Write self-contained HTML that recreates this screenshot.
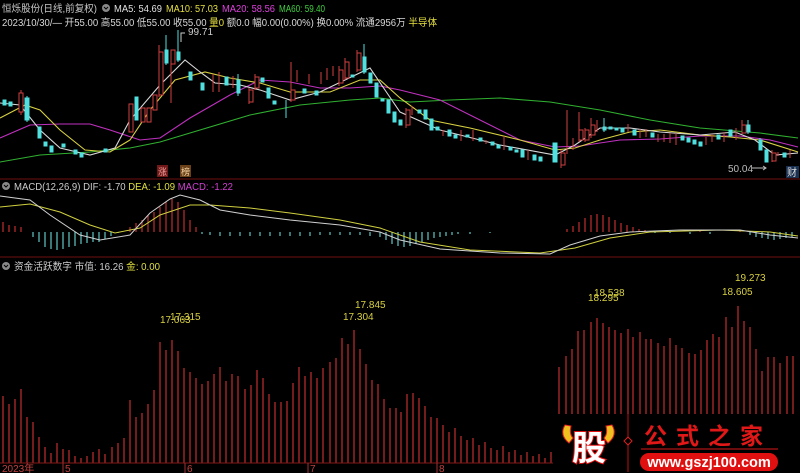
<!DOCTYPE html>
<html><head><meta charset="utf-8"><style>
html,body{margin:0;padding:0;background:#000;width:800px;height:473px;overflow:hidden}
svg{display:block}
text{font-family:"Liberation Sans","Noto Sans CJK SC",sans-serif}
</style></head><body>
<svg width="800" height="473" viewBox="0 0 800 473" xmlns="http://www.w3.org/2000/svg">
<rect width="800" height="473" fill="#000"/>
<!-- header -->
<g font-size="10">
<text x="2" y="12" fill="#c8c8c8" textLength="95" lengthAdjust="spacingAndGlyphs">恒烁股份(日线,前复权)</text>
<circle cx="106" cy="8" r="4" fill="#888"/><path d="M104 7l2 2 2-2" stroke="#000" fill="none"/>
<text x="114" y="12" fill="#e0e0e0" textLength="48" lengthAdjust="spacingAndGlyphs">MA5: 54.69</text>
<text x="166" y="12" fill="#e6e040" textLength="52" lengthAdjust="spacingAndGlyphs">MA10: 57.03</text>
<text x="222" y="12" fill="#e040e0" textLength="53" lengthAdjust="spacingAndGlyphs">MA20: 58.56</text>
<text x="279" y="12" fill="#40d040" textLength="46" lengthAdjust="spacingAndGlyphs">MA60: 59.40</text>
<text x="2" y="26" fill="#d8d8d8" textLength="435" lengthAdjust="spacingAndGlyphs">2023/10/30/— 开55.00 高55.00 低55.00 收55.00 <tspan fill="#e6e040">量0</tspan> 额0.0 幅0.00(0.00%) 换0.00% 流通2956万 <tspan fill="#e6e040">半导体</tspan></text>
</g>
<path d="M181 42V33h4" stroke="#ccc" fill="none"/><text x="188" y="35" font-size="10" fill="#ccc">99.71</text>
<!-- MA lines -->
<g fill="none" stroke-width="1.1">
<polyline stroke="#30b030" points="0,162 40,155 90,152 130,148 160,142 200,130 250,115 300,105 350,100 380,98 410,102 450,100 500,98 550,102 600,110 650,120 700,128 760,133 798,138"/>
<polyline stroke="#c030c0" points="0,138 30,125 60,124 90,124 110,130 140,140 160,138 190,118 230,95 260,80 290,82 320,88 350,88 380,86 400,90 440,100 480,120 520,140 555,147 580,146 620,140 660,139 700,136 740,136 770,140 798,147"/>
<polyline stroke="#d8d040" points="0,118 25,105 40,110 60,130 85,150 110,152 130,140 150,110 175,80 205,72 230,78 260,83 290,92 330,92 360,80 380,80 400,98 430,120 470,128 520,140 555,150 575,148 600,140 630,132 660,130 700,135 730,137 760,140 798,152"/>
<polyline stroke="#d8d8d8" points="0,103 20,105 40,130 60,148 90,155 115,148 130,120 160,85 185,60 200,72 215,83 240,85 260,90 290,100 320,92 345,80 370,68 385,90 400,112 440,130 500,145 555,155 575,145 600,128 630,128 660,132 700,135 735,132 755,140 775,155 798,153"/>
</g>
<!-- candles -->
<g stroke-width="1">
<g stroke="#d04040" fill="none">
<path d="M21 90v25M159 45v52M171 55v48M213 74v18M219 72v20M233 76v12M249 88v16M255 74v16M291 62v40M297 70v12M309 74v10M321 72v12M327 68v12M333 66v10M339 66v20M345 58v22M357 50v22M406 108v20M412 106v9M443 130v6M461 130v11M473 130v11M486 140v4M504 136v14M528 150v10M561 150v18M567 110v44M573 138v12M579 112v30M585 128v14M591 118v20M597 120v12M628 124v8M640 129v9M646 129v8M658 134v8M664 134v8M670 133v10M676 133v12M706 137v8M712 134v8M724 132v10M736 128v12M742 120v14M772 150v12M778 152v4M790 150v8"/>
</g>
<g fill="#000" stroke="#d04040">
<rect x="19" y="93" width="4" height="19"/><rect x="129" y="104" width="4" height="28"/><rect x="141" y="108" width="4" height="14"/><rect x="147" y="108" width="4" height="14"/><rect x="153" y="95" width="4" height="15"/><rect x="159" y="52" width="4" height="43"/><rect x="171" y="50" width="4" height="14"/><rect x="249" y="90" width="4" height="12"/><rect x="255" y="77" width="4" height="11"/><rect x="291" y="90" width="4" height="10"/><rect x="339" y="70" width="4" height="13"/><rect x="345" y="62" width="4" height="16"/><rect x="357" y="53" width="4" height="17"/><rect x="406" y="110" width="4" height="15"/><rect x="561" y="153" width="4" height="12"/><rect x="579" y="130" width="4" height="10"/><rect x="585" y="130" width="4" height="10"/><rect x="591" y="125" width="4" height="10"/><rect x="742" y="125" width="4" height="8"/><rect x="772" y="153" width="4" height="8"/>
</g>
<g fill="#50e0e0" stroke="#50e0e0">
<path d="M27 96v26M166 35v30M178 30v32M238 74v22M286 100v18M364 44v30M604 118v14M748 120v14M760 138v12" fill="none"/>
<rect x="3" y="100" width="3" height="5"/><rect x="9" y="102" width="3" height="4"/><rect x="25" y="98" width="4" height="22"/><rect x="38" y="127" width="3" height="11"/><rect x="44" y="142" width="3" height="4"/><rect x="50" y="146" width="3" height="6"/><rect x="62" y="144" width="3" height="3"/><rect x="74" y="150" width="3" height="4"/><rect x="80" y="153" width="3" height="4"/><rect x="104" y="149" width="3" height="3"/><rect x="135" y="97" width="3" height="23"/><rect x="165" y="50" width="3" height="13"/><rect x="177" y="52" width="3" height="8"/><rect x="189" y="72" width="3" height="8"/><rect x="201" y="83" width="3" height="7"/><rect x="225" y="77" width="3" height="8"/><rect x="237" y="80" width="3" height="13"/><rect x="261" y="78" width="3" height="4"/><rect x="267" y="88" width="3" height="10"/><rect x="273" y="101" width="3" height="3"/><rect x="303" y="89" width="3" height="4"/><rect x="315" y="91" width="3" height="4"/><rect x="351" y="75" width="3" height="2"/><rect x="363" y="57" width="3" height="15"/><rect x="369" y="73" width="3" height="10"/><rect x="375" y="83" width="3" height="14"/><rect x="381" y="99" width="3" height="2"/><rect x="387" y="100" width="3" height="13"/><rect x="393" y="112" width="3" height="10"/><rect x="399" y="120" width="3" height="5"/><rect x="418" y="110" width="3" height="3"/><rect x="424" y="110" width="3" height="9"/><rect x="430" y="119" width="3" height="11"/><rect x="436" y="127" width="3" height="3"/><rect x="448" y="130" width="3" height="6"/><rect x="454" y="135" width="3" height="3"/><rect x="466" y="135" width="3" height="2"/><rect x="479" y="138" width="3" height="3"/><rect x="491" y="142" width="3" height="3"/><rect x="497" y="145" width="3" height="3"/><rect x="509" y="147" width="3" height="3"/><rect x="515" y="150" width="3" height="2"/><rect x="521" y="150" width="3" height="7"/><rect x="533" y="155" width="3" height="5"/><rect x="539" y="157" width="3" height="4"/><rect x="553" y="143" width="4" height="19"/><rect x="603" y="127" width="3" height="3"/><rect x="609" y="127" width="3" height="2"/><rect x="615" y="128" width="3" height="2"/><rect x="621" y="128" width="3" height="4"/><rect x="633" y="130" width="3" height="5"/><rect x="651" y="133" width="3" height="4"/><rect x="681" y="136" width="3" height="4"/><rect x="687" y="138" width="3" height="4"/><rect x="693" y="140" width="3" height="4"/><rect x="699" y="142" width="3" height="4"/><rect x="717" y="135" width="3" height="4"/><rect x="729" y="130" width="3" height="6"/><rect x="747" y="125" width="3" height="7"/><rect x="759" y="140" width="3" height="10"/><rect x="765" y="150" width="3" height="12"/><rect x="783" y="153" width="3" height="4"/>
</g>
</g>
<text x="728" y="172" font-size="10" fill="#bbb">50.04</text>
<path d="M752 168h14m-3 -2l3 2-3 2" stroke="#bbb" fill="none"/>
<rect x="786" y="166" width="13" height="12" fill="#1a3050"/><text x="787" y="176" font-size="10" fill="#ddd">财</text>
<rect x="157" y="165" width="11" height="12" fill="#701818"/><text x="158" y="175" font-size="9" fill="#f0a0a0">涨</text>
<rect x="180" y="165" width="11" height="12" fill="#6a4018"/><text x="181" y="175" font-size="9" fill="#f0d0a0">榜</text>
<!-- separators -->
<line x1="0" y1="179" x2="800" y2="179" stroke="#701010"/>
<line x1="0" y1="257" x2="800" y2="257" stroke="#701010"/>
<!-- MACD -->
<circle cx="6" cy="186" r="4" fill="#888"/><path d="M4 185l2 2 2-2" stroke="#000" fill="none"/>
<text x="14" y="190" font-size="10" fill="#ccc" textLength="219" lengthAdjust="spacingAndGlyphs">MACD(12,26,9)  DIF: -1.70  <tspan fill="#e0e040">DEA: -1.09</tspan>  <tspan fill="#d040d0">MACD: -1.22</tspan></text>
<g stroke-width="1.2">
<path stroke="#c03030" d="M3 232v-10M9 232v-7M15 232v-6M21 232v-5M130 232v-5M136 232v-9M142 232v-12M148 232v-17M154 232v-20M160 232v-25M166 232v-30M172 232v-33M178 232v-30M184 232v-22M190 232v-12M196 232v-5M567 232v-3M573 232v-6M579 232v-10M585 232v-14M591 232v-17M597 232v-18M603 232v-17M609 232v-15M615 232v-12M621 232v-9M627 232v-7M633 232v-5M639 232v-3M645 232v-2M700 232v-1M740 232v-1"/>
<path stroke="#60c8c8" d="M33 232v5M39 232v10M45 232v15M51 232v17M57 232v18M63 232v17M69 232v15M75 232v14M81 232v12M87 232v11M93 232v10M99 232v10M105 232v7M111 232v4M118 232v1M202 232v2M210 232v3M220 232v4M230 232v4M240 232v4M250 232v4M260 232v4M270 232v4M280 232v4M290 232v4M300 232v4M310 232v4M320 232v3M330 232v3M340 232v3M350 232v3M360 232v3M370 232v4M380 232v5M386 232v8M392 232v12M398 232v14M404 232v15M410 232v14M416 232v12M422 232v10M428 232v8M434 232v6M440 232v5M446 232v4M452 232v3M458 232v2M470 232v2M490 232v1M655 232v1M670 232v1M690 232v2M710 232v2M750 232v3M756 232v5M762 232v6M768 232v7M774 232v8M780 232v7M786 232v6M792 232v5"/>
</g>
<g fill="none" stroke-width="1">
<polyline stroke="#d0d040" points="0,207 30,204 60,212 90,225 115,233 140,228 160,215 190,205 210,205 250,208 290,213 340,220 380,228 420,242 470,250 540,253 575,248 610,238 650,232 720,230 770,232 798,236"/>
<polyline stroke="#d0d0d0" points="0,196 30,200 50,215 80,235 100,240 130,235 150,213 170,199 180,195 200,200 220,210 250,215 290,220 340,225 380,232 400,240 440,249 500,253 550,254 570,245 600,236 630,232 680,230 740,230 770,235 798,238"/>
</g>
<!-- bottom panel -->
<circle cx="6" cy="266" r="4" fill="#888"/><path d="M4 265l2 2 2-2" stroke="#000" fill="none"/>
<text x="14" y="270" font-size="10" fill="#ccc" textLength="146" lengthAdjust="spacingAndGlyphs">资金活跃数字  市值: 16.26  <tspan fill="#e0e040">金: 0.00</tspan></text>
<g stroke="#c03030" stroke-width="1.2">
<path d="M3 463V396M9 463V404M15 463V399M21 463V389M27 463V417M33 463V422M39 463V437M45 463V447M51 463V453M57 463V443M63 463V449M69 463V450M75 463V456M81 463V458M87 463V456M93 463V452M99 463V449M105 463V454M112 463V447M118 463V443M124 463V438M130 463V400M136 463V417M142 463V413M148 463V404M154 463V390M160 463V342M166 463V350M172 463V340M178 463V351M184 463V368M190 463V372M196 463V378M202 463V384M208 463V381M214 463V374M220 463V367M226 463V381M232 463V374M238 463V376M245 463V389M251 463V385M257 463V370M263 463V378M269 463V394M275 463V402M281 463V402M287 463V401M293 463V383M299 463V367M305 463V376M311 463V372M317 463V378M323 463V368M330 463V362M336 463V358M342 463V338M348 463V344M354 463V330M360 463V349M366 463V364M372 463V380M378 463V384M384 463V399M390 463V408M396 463V408M401 463V412M407 463V394M413 463V393M419 463V398M425 463V406M431 463V417M437 463V418M443 463V425M449 463V432M455 463V428M461 463V436M467 463V440M473 463V438M479 463V445M485 463V442M491 463V448M497 463V450M503 463V446M509 463V452M515 463V450M521 463V455M527 463V452M533 463V456M539 463V454M545 463V458M551 463V452"/>
<path d="M559 463V367M566 463V356M572 463V349M578 463V331M584 463V330M591 463V322M597 463V318M603 463V323M609 463V327M615 463V330M621 463V333M628 463V329M633 463V337M640 463V332M646 463V339M651 463V339M658 463V343M664 463V346M670 463V338M676 463V345M682 463V348M689 463V353M695 463V354M701 463V350M707 463V340M713 463V334M719 463V337M726 463V317M732 463V327M738 463V306M744 463V321M750 463V327M756 463V349M762 463V371M768 463V357M774 463V357M780 463V363M787 463V356M793 463V356"/>
</g>
<g font-size="10" fill="#d8d040">
<text x="160" y="323">17.063</text><text x="170" y="320">17.315</text>
<text x="355" y="308">17.845</text><text x="343" y="320">17.304</text>
<text x="594" y="296">18.538</text><text x="588" y="301">18.295</text>
<text x="735" y="281">19.273</text><text x="722" y="295">18.605</text>
</g>
<line x1="0" y1="463" x2="555" y2="463" stroke="#801818"/>
<g stroke="#a03030"><path d="M63 463v10M185 463v10M308 463v10M437 463v10"/></g>
<g font-size="10" fill="#c04040"><text x="2" y="472">2023年</text><text x="65" y="472">5</text><text x="187" y="472">6</text><text x="310" y="472">7</text><text x="439" y="472">8</text></g>
<!-- logo -->
<rect x="553" y="414" width="247" height="59" fill="#000"/>
<path d="M565 425q-6 10 4 18l4-5q-4-4-2-12z" fill="#f0c020" stroke="#e02020"/>
<path d="M612 425q6 10-4 18l-4-5q4-4 2-12z" fill="#f0c020" stroke="#e02020"/>
<text x="572" y="460" font-size="34" font-weight="bold" fill="#fff" stroke="#e01010" stroke-width="2" paint-order="stroke">股</text>
<line x1="628" y1="414" x2="628" y2="472" stroke="#c01010"/>
<path d="M628 437l4 4-4 4-4-4z" fill="#000" stroke="#e02020"/>
<text x="644" y="444" font-size="23" font-weight="bold" fill="#e01818" letter-spacing="9">公式之家</text>
<line x1="641" y1="449" x2="778" y2="449" stroke="#901010" stroke-width="1.5"/>
<rect x="640" y="453" width="138" height="18" rx="9" fill="#e01010"/>
<text x="709" y="467" font-size="14.5" font-weight="bold" fill="#fff" text-anchor="middle">www.gszj100.com</text>
</svg>
</body></html>
